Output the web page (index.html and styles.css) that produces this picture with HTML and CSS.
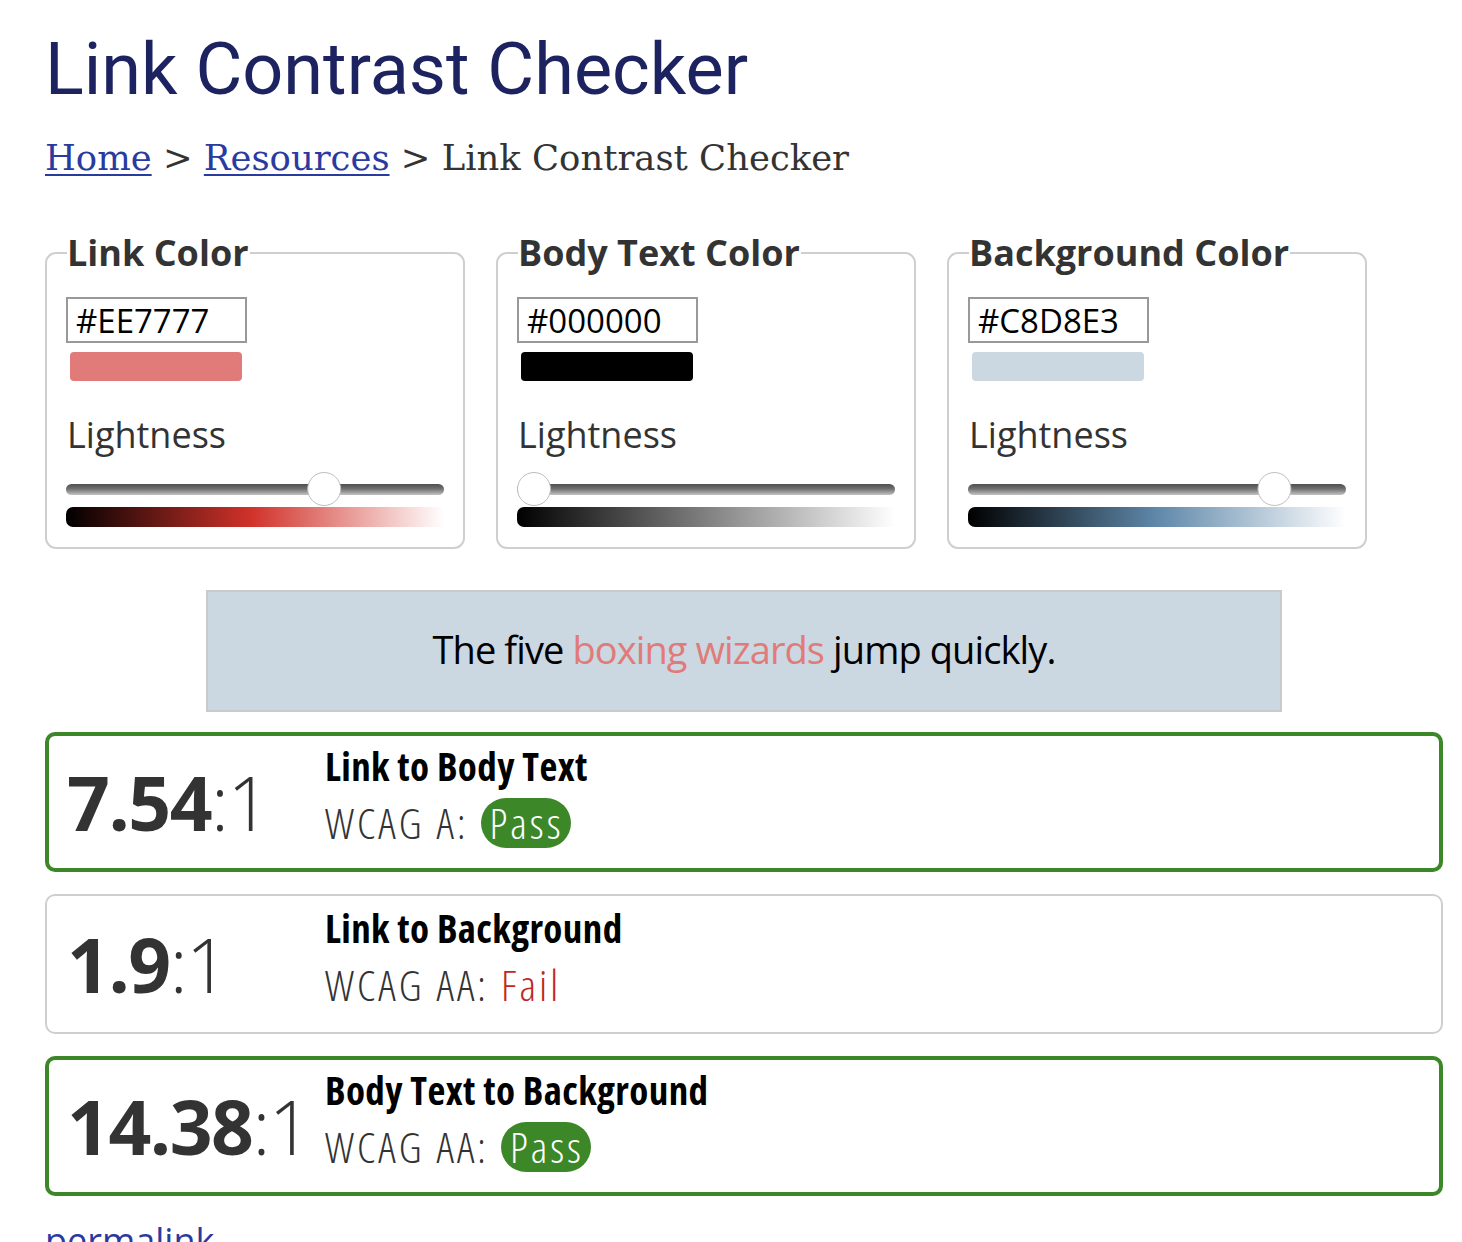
FILE: index.html
```html
<!DOCTYPE html>
<html lang="en">
<head>
<meta charset="utf-8">
<title>Link Contrast Checker</title>
<link rel="stylesheet" href="styles.css">
</head>
<body>
<main class="page">
  <h1 class="title">Link Contrast Checker</h1>
  <nav class="crumbs"><a href="#">Home</a> &gt; <a href="#">Resources</a> &gt; Link Contrast Checker</nav>

  <div class="pickers">
    <fieldset class="picker">
      <legend>Link Color</legend>
      <input class="hex" type="text" value="#EE7777">
      <div class="swatch swatch-link"></div>
      <div class="label">Lightness</div>
      <div class="slider">
        <div class="track"></div>
        <div class="thumb p70" style="left: 70%"></div>
      </div>
      <div class="ramp ramp-link"></div>
    </fieldset>
    <fieldset class="picker">
      <legend>Body Text Color</legend>
      <input class="hex" type="text" value="#000000">
      <div class="swatch swatch-body"></div>
      <div class="label">Lightness</div>
      <div class="slider">
        <div class="track"></div>
        <div class="thumb p0" style="left: 0%"></div>
      </div>
      <div class="ramp ramp-body"></div>
    </fieldset>
    <fieldset class="picker">
      <legend>Background Color</legend>
      <input class="hex" type="text" value="#C8D8E3">
      <div class="swatch swatch-bg"></div>
      <div class="label">Lightness</div>
      <div class="slider">
        <div class="track"></div>
        <div class="thumb p84" style="left: 84%"></div>
      </div>
      <div class="ramp ramp-bg"></div>
    </fieldset>
  </div>

  <div class="preview">
    <p>The five <a href="#">boxing wizards</a> jump quickly.</p>
  </div>

  <div class="results">
    <div class="result pass">
      <div class="ratio"><b>7.54</b>:1</div>
      <div class="info">
        <div class="rtitle">Link to Body Text</div>
        <div class="wcag">WCAG A: <span class="badge">Pass</span></div>
      </div>
    </div>
    <div class="result">
      <div class="ratio"><b>1.9</b>:1</div>
      <div class="info">
        <div class="rtitle">Link to Background</div>
        <div class="wcag">WCAG AA: <span class="fail">Fail</span></div>
      </div>
    </div>
    <div class="result pass">
      <div class="ratio"><b>14.38</b>:1</div>
      <div class="info">
        <div class="rtitle">Body Text to Background</div>
        <div class="wcag">WCAG AA: <span class="badge">Pass</span></div>
      </div>
    </div>
  </div>

  <a class="permalink" href="#">permalink</a>
</main>
</body>
</html>
```
FILE: styles.css
```css
html, body {
  margin: 0;
  padding: 0;
  background: #fff;
}
body {
  font-family: "Open Sans", "DejaVu Sans", sans-serif;
  color: #333;
}
.page {
  padding: 27px 19px 0 45px;
}
.title {
  margin: 0;
  font-family: Roboto, "Liberation Sans", sans-serif;
  font-weight: 400;
  font-size: 72px;
  line-height: normal;
  color: #1d2360;
}
.crumbs {
  margin-top: 25px;
  font-family: "DejaVu Serif", "Liberation Serif", serif;
  font-size: 35.4px;
  color: #333;
}
.crumbs a {
  color: #2a3b9f;
  text-decoration: underline;
  text-decoration-thickness: 2px;
  text-underline-offset: 4px;
}
.pickers {
  display: flex;
  gap: 31px;
  margin-top: 50px;
}
.picker {
  box-sizing: border-box;
  width: 420px;
  margin: 0;
  padding: 20px 19px 20px 20px;
  border: 2px solid #cfcfcf;
  border-radius: 11px;
  display: flex;
  flex-direction: column;
  align-items: flex-start;
}
.picker legend {
  padding: 0 1px 0 0;
  font-weight: 700;
  font-size: 36px;
  line-height: normal;
  color: #333;
}
.hex {
  box-sizing: border-box;
  width: 181px;
  height: 46px;
  margin: 0 0 0 -1px;
  padding: 0 0 0 8px;
  border: 2px solid #999;
  border-radius: 0;
  font-family: "Open Sans", sans-serif;
  font-size: 33px;
  color: #000;
  background: #fff;
  outline: none;
}
.swatch {
  width: 172px;
  height: 29px;
  margin: 9px 0 0 3px;
  border-radius: 4px;
}
.swatch-link { background: #e07b79; }
.swatch-body { background: #000; }
.swatch-bg { background: #cbd8e2; }
.label {
  margin-top: 29px;
  font-size: 36px;
  line-height: normal;
  color: #333;
}
.slider {
  position: relative;
  align-self: stretch;
  height: 34px;
  margin: 13px 0 0 -1px;
}
.track {
  position: absolute;
  left: 0;
  right: 0;
  top: 12px;
  height: 11px;
  border-radius: 6px;
  background: linear-gradient(to bottom, #4f4f4f 0%, #707070 45%, #c4c4c4 100%);
}
.thumb {
  position: absolute;
  top: 0;
  width: 34px;
  height: 34px;
  box-sizing: border-box;
  border-radius: 50%;
  background: #fff;
  border: 1px solid #bdbdbd;
}
.thumb.p70 { transform: translateX(-70%); }
.thumb.p84 { transform: translateX(-84%); }
.ramp {
  align-self: stretch;
  height: 20px;
  margin: 1px 0 0 -1px;
  border-radius: 7px 0 0 7px;
}
.ramp-link { background: linear-gradient(to right, #000 0%, #d1322a 49%, #fff 100%); }
.ramp-body { background: linear-gradient(to right, #000 0%, #808080 50%, #fff 100%); }
.ramp-bg { background: linear-gradient(to right, #000 0%, #5f88aa 50%, #fff 100%); }

.preview {
  box-sizing: border-box;
  width: 1076px;
  height: 122px;
  margin: 41px auto 0;
  background: #cbd7e1;
  border: 2px solid #cacaca;
  display: flex;
  align-items: center;
  justify-content: center;
}
.preview p {
  margin: 0 0 4px;
  font-size: 38px;
  font-weight: 400;
  letter-spacing: -0.9px;
  color: #000;
}
.preview a {
  color: #e07b79;
  text-decoration: none;
}
.results {
  display: flex;
  flex-direction: column;
  gap: 22px;
  margin-top: 20px;
}
.result {
  box-sizing: border-box;
  height: 140px;
  border: 2px solid #cfcfcf;
  border-radius: 10px;
  padding: 0 0 0 20px;
  display: flex;
  align-items: center;
}
.result.pass {
  border: 4px solid #3c8727;
  padding-left: 18px;
}
.ratio {
  width: 258px;
  flex: none;
  font-size: 75px;
  font-weight: 300;
  letter-spacing: -1.5px;
  color: #333;
  line-height: 1;
}
.ratio b {
  font-weight: 700;
}
.info {
  display: flex;
  flex-direction: column;
  gap: 4px;
  padding-bottom: 9px;
}
.rtitle {
  font-size: 39px;
  font-weight: 700;
  font-stretch: 75%;
  letter-spacing: 0.4px;
  color: #000;
  line-height: 1.2;
}
.wcag {
  font-size: 43px;
  font-weight: 300;
  font-stretch: 75%;
  letter-spacing: 3px;
  word-spacing: 1px;
  color: #333;
  line-height: normal;
}
.badge {
  display: inline-block;
  padding: 0 7px 0 9px;
  border-radius: 26px;
  background: #3c8727;
  color: #fff;
  line-height: 50px;
}
.fail {
  color: #c0271e;
}
.permalink {
  display: inline-block;
  margin-top: 20px;
  font-size: 36px;
  color: #2a3b9f;
  text-decoration: none;
}
```
